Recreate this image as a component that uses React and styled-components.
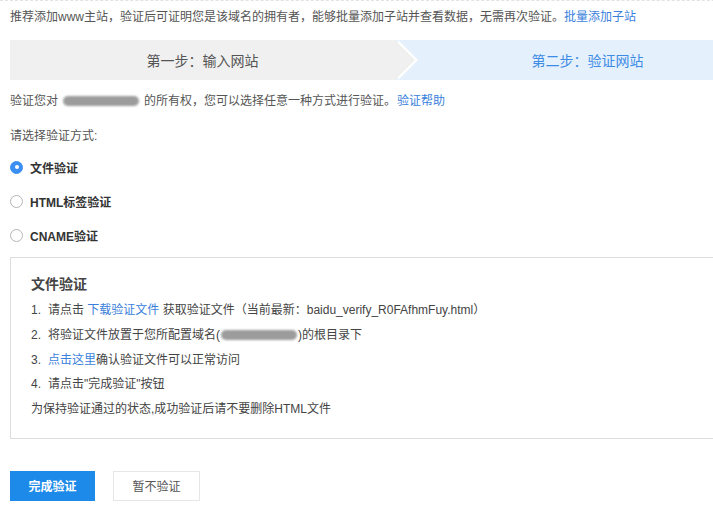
import React from "react";
import styled, { createGlobalStyle } from "styled-components";

const Global = createGlobalStyle`
  html, body { margin: 0; padding: 0; background: #fff; overflow: hidden; }
  body { font-family: "Liberation Sans", "Noto Sans CJK SC", sans-serif; font-size: 12px; color: #555; }
`;

const Frame = styled.div`
  width: 100%;
  overflow: hidden;
`;

const Page = styled.div`
  width: 770px;
  padding: 6px 0 0 10px;
  border-top: 1px dashed #e2e2e2;
`;

const Line = styled.div`
  line-height: 20px;
  color: #555;
  margin-top: ${(p) => p.$mt || 0}px;
`;

const Link = styled.a`
  color: #3a7fdc;
  text-decoration: none;
  margin-left: ${(p) => p.$ml || 0}px;
`;

const Steps = styled.div`
  display: flex;
  height: 40px;
  margin-top: 13px;
  background: #e4f1fd;
`;

const Step = styled.div`
  position: relative;
  flex: 1;
  display: flex;
  align-items: center;
  justify-content: center;
  font-size: 14px;
  color: ${(p) => (p.$active ? "#3d8be4" : "#555")};
  background: ${(p) => (p.$active ? "#e4f1fd" : "#f0f0f0")};
  z-index: ${(p) => (p.$active ? 0 : 1)};
  ${(p) =>
    !p.$active &&
    `
    &::before {
      content: "";
      position: absolute;
      top: 0;
      right: -23px;
      border-top: 20px solid transparent;
      border-bottom: 20px solid transparent;
      border-left: 20px solid #fff;
    }
    &::after {
      content: "";
      position: absolute;
      top: 0;
      right: -20px;
      border-top: 20px solid transparent;
      border-bottom: 20px solid transparent;
      border-left: 20px solid #f0f0f0;
    }
  `}
`;

const Blur = styled.span`
  display: inline-block;
  vertical-align: middle;
  width: ${(p) => p.$w}px;
  height: 10px;
  margin: ${(p) => p.$m || "0 4px"};
  border-radius: 5px;
  background: #9c9c9c;
  filter: blur(0.8px);
  position: relative;
  top: -1px;
`;

const Options = styled.div`
  display: flex;
  flex-direction: column;
  gap: 14px;
  margin-top: 11px;
`;

const Option = styled.label`
  display: flex;
  align-items: center;
  height: 20px;
  font-weight: bold;
  color: #333;
  gap: 7px;
`;

const Radio = styled.span`
  width: 13px;
  height: 13px;
  box-sizing: border-box;
  border-radius: 50%;
  border: 1px solid ${(p) => (p.$checked ? "#3b8ff3" : "#b5b5b5")};
  background: ${(p) => (p.$checked ? "#3b8ff3" : "#fff")};
  display: flex;
  align-items: center;
  justify-content: center;
  &::after {
    content: "";
    width: 4px;
    height: 4px;
    border-radius: 50%;
    background: ${(p) => (p.$checked ? "#fff" : "transparent")};
  }
`;

const Box = styled.div`
  margin-top: 12px;
  border: 1px solid #dedede;
  padding: 16px 20px 16px 20px;
`;

const BoxTitle = styled.div`
  font-size: 14px;
  font-weight: bold;
  color: #444;
  line-height: 20px;
`;

const BoxList = styled.div`
  margin-top: 4px;
`;

const BoxLine = styled.div`
  line-height: 24.75px;
  color: #444;
`;

const Num = styled.span`
  margin-right: 7px;
`;

const Buttons = styled.div`
  display: flex;
  gap: 18px;
  margin-top: 32px;
`;

const Button = styled.button`
  height: 30px;
  width: ${(p) => (p.$primary ? 85 : 87)}px;
  font-family: inherit;
  font-size: 12px;
  font-weight: ${(p) => (p.$primary ? "bold" : "normal")};
  color: ${(p) => (p.$primary ? "#fff" : "#555")};
  background: ${(p) => (p.$primary ? "#1d8ae9" : "#fff")};
  border: ${(p) => (p.$primary ? "none" : "1px solid #e6e6e6")};
  padding: 0;
  cursor: pointer;
`;

export default function App() {
  return (
    <Frame>
      <Global />
      <Page>
        <Line>
          推荐添加www主站，验证后可证明您是该域名的拥有者，能够批量添加子站并查看数据，无需再次验证。
          <Link>批量添加子站</Link>
        </Line>
        <Steps>
          <Step>第一步：输入网站</Step>
          <Step $active>第二步：验证网站</Step>
        </Steps>
        <Line $mt={11}>
          验证您对<Blur $w={76} $m="0 5px 0 5px" />的所有权，您可以选择任意一种方式进行验证。
          <Link $ml={1}>验证帮助</Link>
        </Line>
        <Line $mt={15}>请选择验证方式:</Line>
        <Options>
          <Option>
            <Radio $checked />
            文件验证
          </Option>
          <Option>
            <Radio />
            HTML标签验证
          </Option>
          <Option>
            <Radio />
            CNAME验证
          </Option>
        </Options>
        <Box>
          <BoxTitle>文件验证</BoxTitle>
          <BoxList>
            <BoxLine>
              <Num>1.</Num>请点击 <Link>下载验证文件</Link> 获取验证文件（当前最新：baidu_verify_R0FAfhmFuy.html）
            </BoxLine>
            <BoxLine>
              <Num>2.</Num>将验证文件放置于您所配置域名(<Blur $w={76} $m="0 1px" />)的根目录下
            </BoxLine>
            <BoxLine>
              <Num>3.</Num>
              <Link>点击这里</Link>确认验证文件可以正常访问
            </BoxLine>
            <BoxLine>
              <Num>4.</Num>请点击"完成验证"按钮
            </BoxLine>
            <BoxLine>为保持验证通过的状态,成功验证后请不要删除HTML文件</BoxLine>
          </BoxList>
        </Box>
        <Buttons>
          <Button $primary>完成验证</Button>
          <Button>暂不验证</Button>
        </Buttons>
      </Page>
    </Frame>
  );
}
